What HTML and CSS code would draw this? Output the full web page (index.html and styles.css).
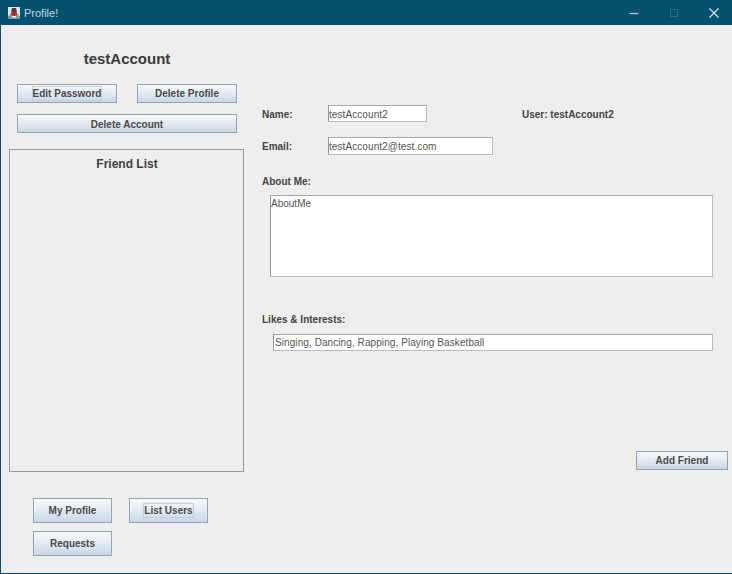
FILE: index.html
```html
<!DOCTYPE html>
<html lang="en">
<head>
    <meta charset="UTF-8">
    <meta name="viewport" content="width=device-width, initial-scale=1.0">
    <title>Profile!</title>
    <link rel="stylesheet" href="styles.css">
</head>
<body>
    <div class="window">
        <div class="titlebar">
            <div class="title">
                <svg class="app-icon" width="14" height="14" viewBox="0 0 14 14">
                    <rect x="1" y="1" width="12" height="12" fill="#dfe5ea"/>
                    <path d="M5 2 H9 L10 6 H4 Z" fill="#4a3f48"/>
                    <path d="M3 9 L5 5.5 H9 L11 9 L8.5 10 H5.5 Z" fill="#96323c"/>
                    <path d="M1 10 L4 8.5 L7 10.5 L10 8.5 L13 10 V13 H1 Z" fill="#8b949c"/>
                    <path d="M5 10 H9 V11.5 H5 Z" fill="#f4f4f4"/>
                </svg>
                <span>Profile!</span>
            </div>
            <div class="controls">
                <svg class="ctl" width="12" height="12" viewBox="0 0 12 12">
                    <path d="M1.5 6.5 H10.5" stroke="#b9cfda" stroke-width="1.2"/>
                </svg>
                <svg class="ctl ctl-max" width="12" height="12" viewBox="0 0 12 12">
                    <rect x="2.5" y="2.5" width="7" height="7" fill="none" stroke="#2f6d88" stroke-width="1"/>
                </svg>
                <svg class="ctl" width="12" height="12" viewBox="0 0 12 12">
                    <path d="M1.5 1.5 L10.5 10.5 M10.5 1.5 L1.5 10.5" stroke="#d9e6ec" stroke-width="1.2"/>
                </svg>
            </div>
        </div>

        <div class="content">
            <div class="left">
                <h1 class="account">testAccount</h1>
                <div class="btn-row">
                    <button class="btn btn-edit"><span class="focus">Edit Password</span></button>
                    <button class="btn btn-edit">Delete Profile</button>
                </div>
                <button class="btn btn-wide">Delete Account</button>
                <div class="friends">
                    <h2>Friend List</h2>
                </div>
                <div class="nav">
                    <button class="btn btn-nav">My Profile</button>
                    <button class="btn btn-nav"><span class="focus">List Users</span></button>
                    <button class="btn btn-nav">Requests</button>
                </div>
            </div>

            <div class="right">
                <div class="row row-name">
                    <label class="field-label">Name:</label>
                    <div class="input input-name">testAccount2</div>
                    <span class="user">User: testAccount2</span>
                </div>
                <div class="row row-email">
                    <label class="field-label">Email:</label>
                    <div class="input input-email">testAccount2@test.com</div>
                </div>
                <label class="block-label about-label">About Me:</label>
                <div class="input about">AboutMe</div>
                <label class="block-label likes-label">Likes &amp; Interests:</label>
                <div class="input likes">Singing, Dancing, Rapping, Playing Basketball</div>
                <div class="actions">
                    <button class="btn btn-add">Add Friend</button>
                </div>
            </div>
        </div>
    </div>
</body>
</html>
```

FILE: styles.css
```css
* {
    box-sizing: border-box;
}

html, body {
    margin: 0;
    padding: 0;
}

body {
    width: 732px;
    height: 574px;
    overflow: hidden;
    font-family: "Liberation Sans", Arial, sans-serif;
    font-size: 10px;
    color: #444;
}

.window {
    width: 732px;
    height: 574px;
    display: flex;
    flex-direction: column;
    background: #eeeeee;
    border-left: 1px solid #04506f;
    border-bottom: 1px solid #04506f;
}

.titlebar {
    height: 25px;
    margin-left: -1px;
    flex: none;
    display: flex;
    justify-content: space-between;
    align-items: center;
    background: #04506f;
    color: #c5d8e1;
    font-size: 11px;
}

.title {
    display: flex;
    align-items: center;
    padding-left: 7px;
    gap: 3px;
}

.controls {
    display: flex;
    padding-right: 12px;
    gap: 28px;
}

.content {
    flex: 1;
    display: flex;
}

.left {
    width: 243px;
    flex: none;
    padding-left: 8px;
}

.account {
    margin: 25px 0 0;
    width: 236px;
    height: 34px;
    text-align: center;
    font-size: 15px;
    line-height: 18px;
    font-weight: bold;
    color: #3a3a3a;
}

.btn {
    display: block;
    padding: 0;
    font-family: inherit;
    font-size: 10px;
    font-weight: bold;
    color: #4a4a4a;
    border: 1px solid #95a3b0;
    background: linear-gradient(to bottom, #f6f9fc 0%, #e9eff5 35%, #c9d7e5 100%);
}

.btn-row {
    display: flex;
    gap: 20px;
    padding-left: 8px;
}

.btn-edit {
    width: 100px;
    height: 19px;
}

.btn-wide {
    width: 220px;
    height: 19px;
    margin: 11px 0 0 8px;
    padding-top: 1px;
}

.focus {
    border: 1px solid #c3cfdb;
    padding: 1px 0;
}

.friends {
    width: 235px;
    height: 323px;
    margin-top: 16px;
    border: 1px solid #949ca4;
}

.friends h2 {
    margin: 7px 0 0;
    padding-left: 1px;
    text-align: center;
    font-size: 12px;
    line-height: 14px;
    font-weight: bold;
    color: #3f3f3f;
}

.nav {
    display: grid;
    grid-template-columns: 79px 79px;
    gap: 8px 17px;
    margin: 26px 0 0 24px;
}

.btn-nav {
    height: 25px;
}

.right {
    flex: 1;
    padding-left: 18px;
}

.row {
    display: flex;
    align-items: center;
}

.row-name {
    margin-top: 80px;
}

.row-email {
    margin-top: 15px;
}

.field-label {
    width: 66px;
    padding-top: 2px;
    font-weight: bold;
}

.row-email .field-label {
    padding-top: 0;
}

.input {
    background: #fff;
    border: 1px solid #b4bcc3;
    border-top-color: #a0a8b0;
    border-left-color: #8f979f;
    color: #555;
    font-size: 10px;
    line-height: 15px;
    letter-spacing: 0.08px;
}

.input-name {
    width: 99px;
    height: 17px;
    line-height: 17px;
}

.input-email {
    width: 165px;
    height: 18px;
    line-height: 17px;
}

.user {
    margin-left: 95px;
    padding-top: 2px;
    font-weight: bold;
}

.block-label {
    display: block;
    font-weight: bold;
    line-height: 12px;
}

.about-label {
    margin-top: 21px;
}

.about {
    width: 443px;
    height: 82px;
    margin: 7px 0 0 8px;
    letter-spacing: 0;
}

.likes-label {
    margin-top: 37px;
}

.likes {
    width: 440px;
    height: 17px;
    margin: 8px 0 0 11px;
    padding-left: 1px;
}

.actions {
    display: flex;
    justify-content: flex-end;
    margin-top: 100px;
    padding-right: 4px;
}

.btn-add {
    width: 92px;
    height: 19px;
}
```
